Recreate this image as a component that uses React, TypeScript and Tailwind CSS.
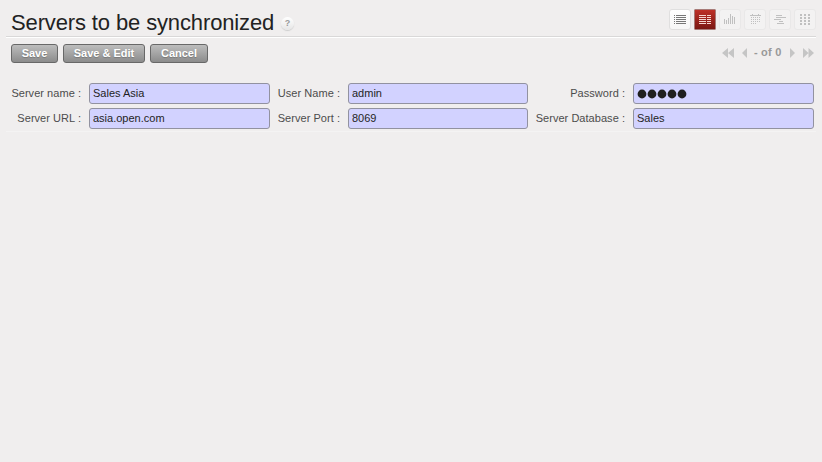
import React from 'react';

type Bar = [number, number, number, number];

const grid = (xs: number[], ys: number[], w: number, h: number): Bar[] =>
  ys.flatMap((y) => xs.map((x): Bar => [x, y, w, h]));

const rows = [6, 8, 10, 12, 14];
const listBars: Bar[] = [...grid([5], rows, 1, 1), ...grid([7], rows, 10, 1)];
const formBars: Bar[] = [...grid([5], rows, 7, 1), ...grid([13], rows, 4, 1)];
const chartBars: Bar[] = [[5, 10, 1, 5], [7, 11, 1, 4], [9, 9, 1, 6], [11, 5, 1, 10], [13, 7, 1, 8], [15, 8, 1, 7]];
const calendarBars: Bar[] = [[8, 5, 1, 1], [14, 5, 1, 1], [6, 6, 11, 1], ...grid([7, 9, 11, 13, 15], [8, 10, 12], 1, 1), ...grid([7, 9, 11], [14], 1, 1)];
const ganttBars: Bar[] = [[7, 6, 6, 1], [7, 8, 10, 1], [5, 10, 7, 1], [10, 12, 4, 1], [8, 14, 7, 1]];
const kanbanBars: Bar[] = grid([6, 10, 14], [5, 8, 11, 14], 2, 2);

const views: { name: string; bars: Bar[]; state: 'on' | 'ready' | 'off' }[] = [
  { name: 'List', bars: listBars, state: 'ready' },
  { name: 'Form', bars: formBars, state: 'on' },
  { name: 'Graph', bars: chartBars, state: 'off' },
  { name: 'Calendar', bars: calendarBars, state: 'off' },
  { name: 'Gantt', bars: ganttBars, state: 'off' },
  { name: 'Kanban', bars: kanbanBars, state: 'off' },
];

const viewStyle = {
  on: 'rounded-[1px] border-[#a77b78] bg-linear-to-b from-[#bd3027] to-[#7b1712] text-[#f5d5d0]',
  ready: 'rounded-[3px] border-[#e0dfdf] bg-linear-to-b from-white to-[#f6f6f6] text-[#777]',
  off: 'rounded-[3px] border-[#e9e8e8] bg-[#f3f2f2] text-[#c0c0c0]',
};

function ViewButton({ name, bars, state }: (typeof views)[number]) {
  return (
    <button aria-label={name} className={`h-[21px] w-[22px] border ${viewStyle[state]}`}>
      <svg className="-mt-px -ml-px block" width="22" height="21" fill="currentColor" shapeRendering="crispEdges">
        {bars.map(([x, y, w, h], i) => <rect key={i} x={x} y={y} width={w} height={h} />)}
      </svg>
    </button>
  );
}

function Action({ label, width }: { label: string; width: string }) {
  return (
    <button className={`${width} h-[19px] rounded-[3px] border border-[#686868] bg-linear-to-b from-[#bdbdbd] to-[#8c8c8c] text-[11px] leading-[17px] font-bold whitespace-nowrap text-white [text-shadow:0_1px_1px_#777]`}>
      {label}
    </button>
  );
}

function Arrow({ d, width }: { d: string; width: number }) {
  return <svg width={width} height="10" fill="#c5c5c5"><path d={d} /></svg>;
}

function Field({ label, value, password = false }: { label: string; value: string; password?: boolean }) {
  return (
    <>
      <label className="pr-[8px] text-right leading-[20px] tracking-[0.04px] whitespace-nowrap text-[#4c4c4c]">{label} :</label>
      <div className="flex h-[21px] items-center rounded-[3px] border border-[#9292a0] bg-[#d2d2ff] pl-[3px] leading-[19px] text-[#1f1f24]">
        {password ? (
          <svg width="52" height="10" fill="#1f1f1f" aria-label={value}>
            {[5, 15, 25, 35, 45].map((x) => <circle key={x} cx={x} cy="5" r="4.4" />)}
          </svg>
        ) : <span className="-mt-px">{value}</span>}
      </div>
    </>
  );
}

export default function App() {
  return (
    <main className="h-[462px] w-[822px] overflow-hidden bg-[#f0eeee] px-[6px] font-['Liberation_Sans',Arial,sans-serif] text-[11px]">
      <header className="flex h-[38px] justify-between border-b border-white pt-[9px] pl-[5px] shadow-[inset_0_-1px_0_#d9d8d8]">
        <div className="flex">
          <h1 className="w-[270px] text-[22px] leading-[27px] tracking-[-0.13px] whitespace-nowrap text-[#222]">Servers to be synchronized</h1>
          <span className="mt-[8px] flex h-[13px] w-[13px] items-center justify-center rounded-full bg-linear-to-b from-white to-[#e6e6e6] text-[9px] font-bold text-[#999] shadow-[0_1px_1px_#ccc]">?</span>
        </div>
        <nav className="flex gap-[3px]">
          {views.map((view) => <ViewButton key={view.name} {...view} />)}
        </nav>
      </header>
      <div className="mt-[6px] flex h-[19px] justify-between pl-[5px]">
        <div className="flex gap-[5px]">
          <Action label="Save" width="w-[47px]" />
          <Action label="Save & Edit" width="w-[82px]" />
          <Action label="Cancel" width="w-[58px]" />
        </div>
        <div className="flex h-[18px] items-center pr-[2px]">
          <Arrow width={19} d="M6 0V10L0 5zM12 0V10L6 5z" />
          <Arrow width={13} d="M6 0V10L1 5z" />
          <span className="-mt-[2px] w-[35px] leading-[18px] font-bold tracking-[0.2px] whitespace-nowrap text-[#999]">- of 0</span>
          <Arrow width={14} d="M1 0V10L6 5z" />
          <Arrow width={11} d="M0 0V10L5.500 5zM5.500 0V10L11 5z" />
        </div>
      </div>
      <form className="mt-[20px] grid grid-cols-[83px_181px_78px_180px_105px_181px] gap-y-[4px]">
        <Field label="Server name" value="Sales Asia" />
        <Field label="User Name" value="admin" />
        <Field label="Password" value="Password" password />
        <Field label="Server URL" value="asia.open.com" />
        <Field label="Server Port" value="8069" />
        <Field label="Server Database" value="Sales" />
      </form>
      <div className="mt-[2px] h-px bg-[#f4f3f3]" />
    </main>
  );
}
